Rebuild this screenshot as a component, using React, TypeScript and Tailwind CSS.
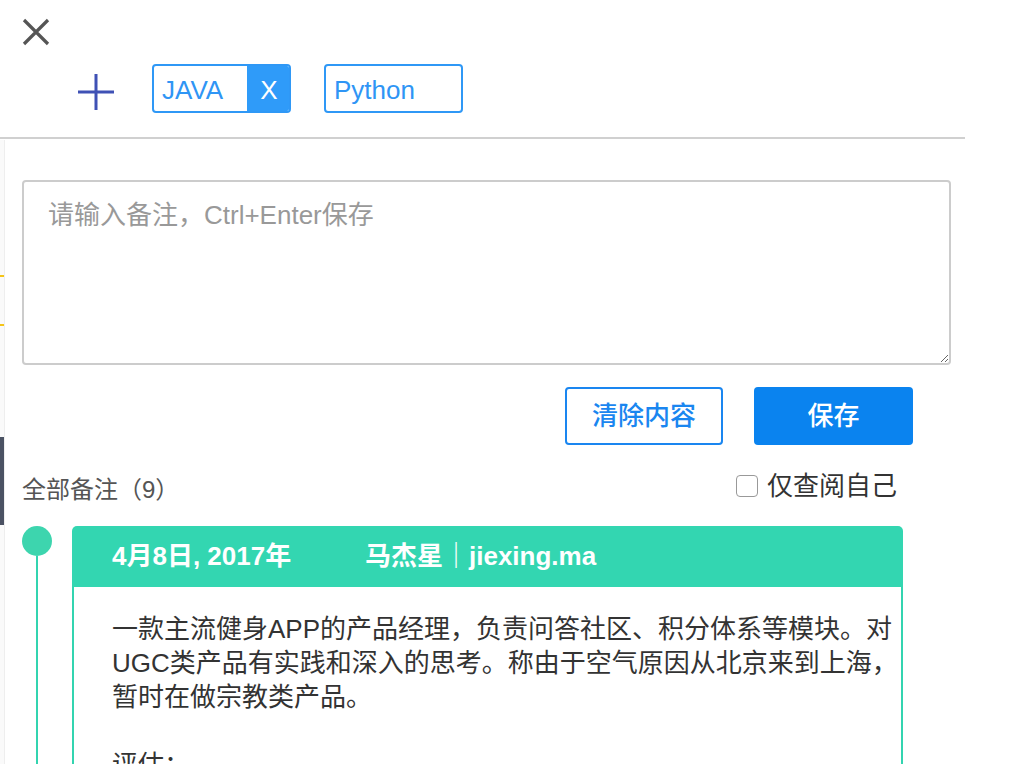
import React from "react";

const font = { fontFamily: '"Liberation Sans", "Noto Sans CJK SC", sans-serif' };

const Tag = ({ label, removable }: { label: string; removable?: boolean }) => (
  <div className="flex h-[49px] w-[139px] items-stretch overflow-hidden rounded-[4px] border-2 border-[#2f98f6]">
    <span className="flex flex-1 items-center pl-[8px] pt-[4px] text-[26px] text-[#2f95f5]">{label}</span>
    {removable && (
      <span className="flex w-[42px] items-center justify-center bg-[#2f9bf9] pl-[2px] pt-[4px] text-[26px] text-white">X</span>
    )}
  </div>
);

export default function App() {
  return (
    <div className="relative h-[764px] w-[1036px] overflow-hidden bg-white text-[#333]" style={font}>
      {/* edge of the page underneath */}
      <div className="absolute left-0 top-[140px] h-[624px] w-[5px] border-r border-[#eeeeee] bg-[#fafafa]">
        <div className="mt-[135px] h-[2px] w-[4px] bg-[#f5c518]" />
        <div className="mt-[47px] h-[2px] w-[4px] bg-[#f5c518]" />
        <div className="mt-[111px] h-[88px] w-[4px] bg-[#4b5263]" />
      </div>

      {/* top bar */}
      <div className="h-[139px] w-[965px] border-b-2 border-[#d0d0d0]">
        <div className="pl-[22px] pt-[18px]">
          <svg width="28" height="28" viewBox="0 0 28 28" fill="none" stroke="#555" strokeWidth="3.2">
            <path d="M2 2 L26 26 M26 2 L2 26" />
          </svg>
        </div>
        <div className="mt-[18px] flex items-center pl-[78px]">
          <svg className="mt-[6px]" width="36" height="36" viewBox="0 0 36 36" fill="none" stroke="#3f51b5" strokeWidth="3">
            <path d="M18 0 V36 M0 18 H36" />
          </svg>
          <div className="ml-[38px] flex gap-[33px]">
            <Tag label="JAVA" removable />
            <Tag label="Python" />
          </div>
        </div>
      </div>

      {/* note editor */}
      <div className="w-[951px] pl-[22px] pt-[41px]">
        <textarea
          className="block h-[185px] w-[929px] rounded-[4px] border-2 border-[#cccccc] px-[24px] py-[14px] text-[26px] leading-[38px] text-[#333] outline-none placeholder:text-[#999]"
          placeholder="请输入备注，Ctrl+Enter保存"
          style={font}
        />
        <div className="mt-[22px] flex justify-end gap-[31px] pr-[38px]">
          <button className="h-[58px] w-[158px] rounded-[4px] border-2 border-[#1a86f0] text-[26px] font-medium text-[#1a86f0]">
            清除内容
          </button>
          <button className="h-[58px] w-[159px] rounded-[4px] bg-[#0a83ef] text-[26px] font-medium text-white">
            保存
          </button>
        </div>
      </div>

      {/* list header */}
      <div className="flex w-[903px] items-center justify-between pl-[22px] pr-[6px] pt-[27px]">
        <span className="text-[24px] text-[#555]">全部备注（9）</span>
        <label className="-mt-[8px] flex items-center gap-[9px] text-[26px] text-[#333]">
          <span className="h-[22px] w-[22px] rounded-[4px] border border-[#999] bg-white" />
          仅查阅自己
        </label>
      </div>

      {/* timeline */}
      <div className="mt-[18px] flex w-[903px] pl-[22px]">
        <div className="flex w-[30px] flex-col items-center">
          <div className="h-[30px] w-[30px] rounded-full bg-[#3dd5ae]" />
          <div className="w-[2px] flex-1 bg-[#33d4b0]" />
        </div>
        <div className="ml-[20px] flex-1">
          <div className="flex h-[61px] items-center rounded-t-[5px] bg-[#33d6b1] pl-[40px] text-[26px] font-semibold text-white">
            <span className="w-[253px]">4月8日, 2017年</span>
            <span>马杰星｜jiexing.ma</span>
          </div>
          <div className="h-[300px] border-x-2 border-[#33d4b0] pl-[38px] pt-[25px] text-[26px] leading-[34px] text-[#333]">
            <p className="whitespace-nowrap">一款主流健身APP的产品经理，负责问答社区、积分体系等模块。对</p>
            <p className="whitespace-nowrap">UGC类产品有实践和深入的思考。称由于空气原因从北京来到上海，</p>
            <p className="whitespace-nowrap">暂时在做宗教类产品。</p>
            <p className="mt-[34px]">评估：</p>
          </div>
        </div>
      </div>
    </div>
  );
}
